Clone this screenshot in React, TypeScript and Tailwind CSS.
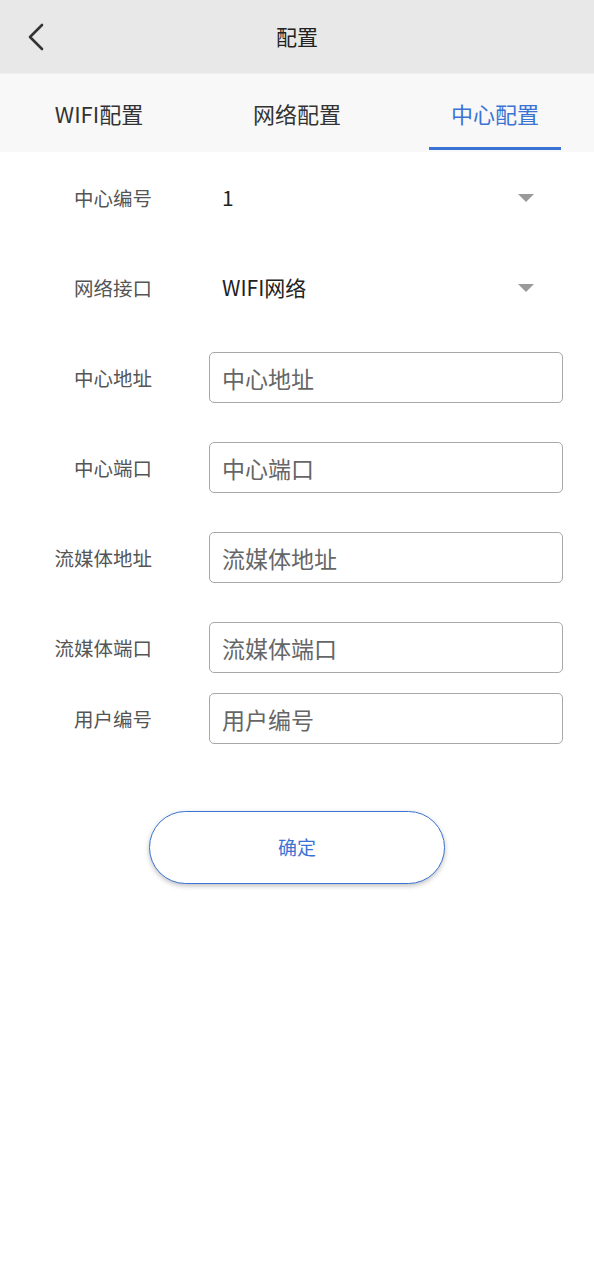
import { useState } from "react";

const font = { fontFamily: '"Noto Sans CJK SC", "Noto Sans", sans-serif' };

const SelectRow = ({ label, value }: { label: string; value: string }) => (
  <div className="flex h-[51px] items-center">
    <div className="w-[152px] shrink-0 text-right text-[19.5px] text-[#555]">{label}</div>
    <div className="ml-[57px] flex flex-1 items-center pl-[13px] pr-[29px]">
      <span className="flex-1 text-[21px] text-[#222]">{value}</span>
      <span className="h-0 w-0 border-x-[8px] border-t-[8px] border-x-transparent border-t-[#9a9a9a]" />
    </div>
  </div>
);

const InputRow = ({ label }: { label: string }) => {
  const [v, setV] = useState("");
  return (
    <div className="flex h-[51px] items-center">
      <div className="w-[152px] shrink-0 text-right text-[19.5px] text-[#555]">{label}</div>
      <input
        value={v}
        onChange={(e) => setV(e.target.value)}
        placeholder={label}
        className="ml-[57px] h-[51px] flex-1 rounded-[5px] border-[1.5px] border-[#a8a8a8] bg-white px-[12px] text-[23px] text-[#333] outline-none placeholder:text-[#666]"
        style={font}
      />
    </div>
  );
};

export default function App() {
  const [tab, setTab] = useState(2);
  const tabs = ["WIFI配置", "网络配置", "中心配置"];

  return (
    <div className="min-h-[1280px] w-[594px] bg-white" style={font}>
      <header className="relative flex h-[73px] items-center justify-center bg-[#e8e8e8]">
        <button className="absolute left-[26px] top-[22px] p-0">
          <svg width="20" height="30" viewBox="0 0 20 30" fill="none">
            <path d="M16 3L4 15L16 27" stroke="#333" strokeWidth="2.6" strokeLinecap="round" strokeLinejoin="round" />
          </svg>
        </button>
        <h1 className="text-[21px] text-[#222]">配置</h1>
      </header>

      <nav className="flex h-[79px] border-t border-[#f0f0f0] bg-[#f8f8f8]">
        {tabs.map((t, i) => (
          <button
            key={t}
            onClick={() => setTab(i)}
            className="relative flex flex-1 items-center justify-center pt-[1px] text-[22px]"
          >
            <span className={tab === i ? "text-[#3b73d4]" : "text-[#333]"}>{t}</span>
            {tab === i && (
              <span className="absolute bottom-[2px] left-1/2 h-[3px] w-[132px] -translate-x-1/2 bg-[#3b73d4]" />
            )}
          </button>
        ))}
      </nav>

      <main className="flex flex-col pr-[31px] pt-[20px]">
        <div className="flex flex-col gap-[39px]">
          <SelectRow label="中心编号" value="1" />
          <SelectRow label="网络接口" value="WIFI网络" />
          <InputRow label="中心地址" />
          <InputRow label="中心端口" />
          <InputRow label="流媒体地址" />
          <InputRow label="流媒体端口" />
        </div>
        <div className="mt-[20px]">
          <InputRow label="用户编号" />
        </div>
        <div className="mt-[67px] flex justify-center pl-[31px]">
          <button className="h-[73px] w-[296px] rounded-full border-[1.5px] border-[#3b73d4] bg-white text-[19px] text-[#3b73d4] shadow-[0_2px_5px_rgba(0,0,0,0.25)]">
            确定
          </button>
        </div>
      </main>
    </div>
  );
}
